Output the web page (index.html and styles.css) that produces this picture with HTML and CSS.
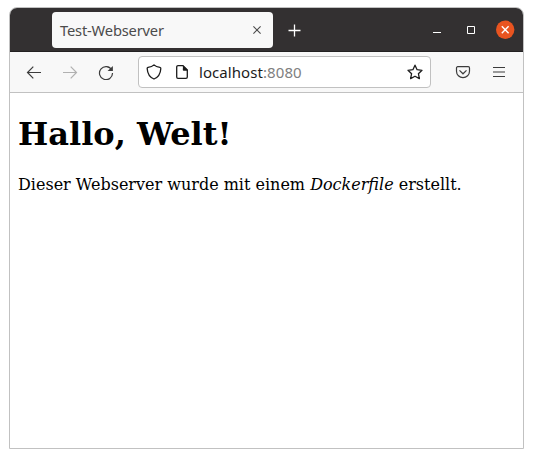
FILE: index.html
```html
<!DOCTYPE html>
<html lang="de">
<head>
<meta charset="utf-8">
<title>Test-Webserver</title>
<link rel="stylesheet" href="styles.css">
</head>
<body>
<div class="window">
  <header class="titlebar">
    <div class="tab">
      <span class="tab-title">Test-Webserver</span>
      <svg class="tab-close" viewBox="0 0 16 16"><path d="M4.4 4.4l7.2 7.2M11.6 4.4l-7.2 7.2"/></svg>
    </div>
    <svg class="new-tab" viewBox="0 0 16 16"><path d="M8.5 2.5v12M2.5 8.5h12"/></svg>
    <div class="controls">
      <svg viewBox="0 0 16 16"><path d="M4 10.5h8"/></svg>
      <svg viewBox="0 0 16 16"><path d="M4.5 4.5h7v7h-7z"/></svg>
      <svg class="close" viewBox="0 0 19 19"><circle cx="9.2" cy="9.7" r="9.2"/><path d="M5.8 6.2l6.8 7M12.6 6.2l-6.8 7"/></svg>
    </div>
  </header>
  <nav class="toolbar">
    <span class="button"><svg viewBox="0 0 16 16"><path d="M15 8.5H1.8M7.3 2.7L1.5 8.5l5.8 5.8"/></svg></span>
    <span class="button disabled"><svg viewBox="0 0 16 16"><path d="M1 8.5h13.2M8.7 2.7l5.8 5.8-5.8 5.8"/></svg></span>
    <span class="button"><svg viewBox="0 0 16 16"><path d="M13.7 6A6.5 6.5 0 1 0 14.5 9"/><path class="solid" d="M14.9 2v5.1H9.6z"/></svg></span>
    <div class="urlbar">
      <span class="icon"><svg viewBox="0 0 16 16"><path d="M8 .9C6.4 2.4 4 3.1 2.1 3.4 1.4 3.5 1.1 4 1.2 4.7 1.5 9.5 4.1 13.4 8 15c3.9-1.6 6.5-5.5 6.8-10.3.1-.7-.2-1.2-.9-1.3C12 3.1 9.6 2.4 8 .9z"/></svg></span>
      <span class="icon"><svg viewBox="0 0 16 16"><path d="M9 1.7H4A1.3 1.3 0 0 0 2.7 3v10A1.3 1.3 0 0 0 4 14.3h8a1.3 1.3 0 0 0 1.3-1.3V6z"/><path class="solid" d="M9 1.2L13.8 6v.8H9.7A.9.9 0 0 1 8.8 6z"/></svg></span>
      <span class="address">localhost<span class="port">:8080</span></span>
      <span class="icon star"><svg viewBox="0 0 16 16"><path d="M8 1.2l2.1 4.5 4.9.6-3.6 3.4 1 4.9L8 12.2l-4.4 2.4 1-4.9L1 6.3l4.9-.6z"/></svg></span>
    </div>
    <span class="button pocket"><svg viewBox="0 0 16 16"><path d="M2.7 2.7h10.6a1.2 1.2 0 0 1 1.2 1.2v3.3a6.5 6.5 0 0 1-13 0V3.9a1.2 1.2 0 0 1 1.2-1.2z"/><path d="M4.5 6.4L8 9.8l3.5-3.4"/></svg></span>
    <span class="button"><svg viewBox="0 0 16 16"><path d="M2 3.5h12M2 8h12M2 12.5h12"/></svg></span>
  </nav>
  <main class="page">
    <h1>Hallo, Welt!</h1>
    <p>Dieser Webserver wurde mit einem <em>Dockerfile</em> erstellt.</p>
  </main>
</div>
</body>
</html>
```
FILE: styles.css
```css
* { box-sizing: border-box; }

body {
  margin: 0;
  padding: 7px 9px 9px;
  background: #fff;
}

svg {
  display: block;
  width: 16px;
  height: 16px;
  flex: none;
  fill: none;
  stroke: currentColor;
}

.window {
  width: 515px;
  height: 442px;
  border: 1px solid #c1c1c1;
  border-radius: 8px 8px 0 0;
  background: #fff;
}

.titlebar {
  display: flex;
  align-items: center;
  height: 44px;
  padding: 0 8px 0 42px;
  border-bottom: 1px solid #232122;
  border-radius: 7px 7px 0 0;
  background: #333031;
  color: #fff;
}

.tab {
  display: flex;
  align-items: center;
  justify-content: space-between;
  width: 221px;
  height: 36px;
  margin-top: 1px;
  padding: 0 8px;
  border-radius: 4px;
  background: #f8f8f8;
  color: #4b4b4b;
}

.tab-title {
  font: 14.7px/20px "Noto Sans", "Open Sans", sans-serif;
  letter-spacing: -0.18px;
}

.tab-close { stroke-width: 1.1; }

.new-tab {
  margin-left: 13px;
  margin-top: 1px;
  stroke-width: 1.3;
}

.controls {
  display: flex;
  align-items: center;
  gap: 18px;
  margin-left: auto;
}

.controls .close {
  width: 19px;
  height: 19px;
  margin-left: -1px;
  stroke-width: 1.4;
}

.close circle {
  fill: #e95420;
  stroke: none;
}

.toolbar {
  display: flex;
  align-items: center;
  height: 41px;
  padding: 0 6px;
  border-bottom: 1px solid #c1c1c1;
  background: #f8f8f8;
  color: #3c3c3c;
}

.button {
  display: flex;
  justify-content: center;
  width: 36px;
  stroke-width: 1.2;
}

.disabled { color: #b1b1b1; }

.solid {
  fill: currentColor;
  stroke: none;
}

.urlbar {
  display: flex;
  align-items: center;
  width: 293px;
  height: 32px;
  margin-left: 14px;
  padding: 0 1px;
  border: 1px solid #c1c1c1;
  border-radius: 4px;
  background: #fff;
  color: #1c1c1c;
}

.icon {
  display: flex;
  justify-content: center;
  width: 28px;
  stroke-width: 1.3;
  stroke-linejoin: round;
}

.address {
  margin-left: 3px;
  font: 15px/20px "Noto Sans", "Open Sans", sans-serif;
  letter-spacing: 0.07px;
}

.port { color: #808080; }

.star { margin-left: auto; }

.pocket { margin-left: 14px; }

.page {
  padding: 0 8px;
  color: #000;
  font: 16px/19px "DejaVu Serif", serif;
}

.page h1 {
  margin: 22px 0;
  font-size: 32px;
  line-height: 38px;
}

.page p { margin: 0; }
```
